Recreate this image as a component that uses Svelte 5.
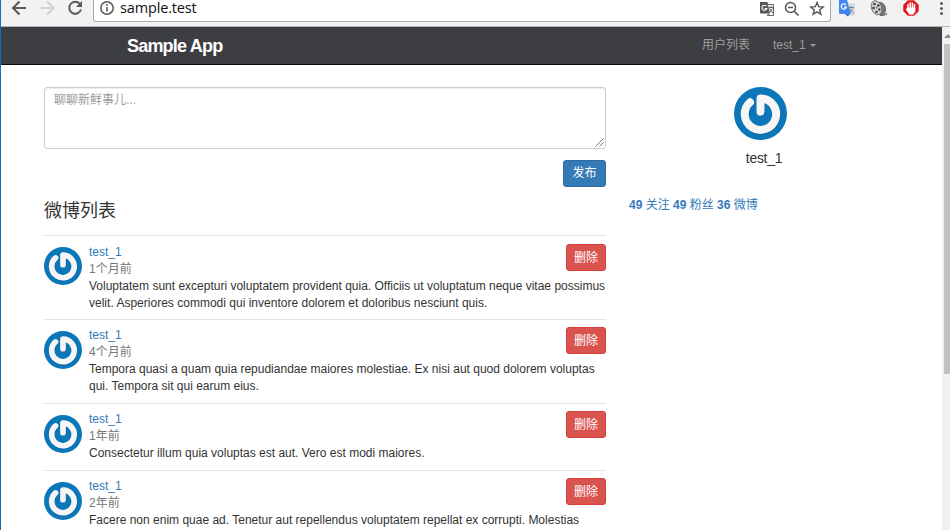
<script>
  const posts = [
    { age: '1个月前', lines: [
      { text: 'Voluptatem sunt excepturi voluptatem provident quia. Officiis ut voluptatum neque vitae possimus', ls: 0 },
      { text: 'velit. Asperiores commodi qui inventore dolorem et doloribus nesciunt quis.', ls: 0.01 }] },
    { age: '4个月前', lines: [
      { text: 'Tempora quasi a quam quia repudiandae maiores molestiae. Ex nisi aut quod dolorem voluptas', ls: 0 },
      { text: 'qui. Tempora sit qui earum eius.', ls: 0 }] },
    { age: '1年前', lines: [
      { text: 'Consectetur illum quia voluptas est aut. Vero est modi maiores.', ls: 0 }] },
    { age: '2年前', lines: [
      { text: 'Facere non enim quae ad. Tenetur aut repellendus voluptatem repellat ex corrupti. Molestias', ls: 0 }] }
  ];
</script>

{#snippet avatar(size)}
  <svg class="avatar" width={size} height={size} viewBox="0 0 52 52">
    <circle cx="26" cy="26" r="26" fill="#0b76b8" />
    <g fill="none" stroke-linecap="round" stroke-linejoin="round">
      <path d="M15.800 15A15.400 15.400 0 1 0 26 11.200V24.300" stroke="#07568a" stroke-opacity=".5" stroke-width="8" transform="translate(.4 .8)" />
      <path d="M15.800 15A15.400 15.400 0 1 0 26 11.200V24.300" stroke="#f6f6f6" stroke-width="7.800" />
    </g>
  </svg>
{/snippet}

<div class="window">
  <header class="toolbar">
    <svg class="tools" width="90" height="25" viewBox="0 0 90 25" fill="none" stroke="#5a5a5a" stroke-width="2">
      <path d="M26 8H13.500M19.500 1.500L13 8l6.500 6.500" />
      <path d="M40 8h12.500M47 1.500l6.500 6.500-6.500 6.500" stroke="#d2d2d4" />
      <path d="M79.800 3.800A6 6 0 1 0 81 9.500" />
      <path d="M82 1v6h-6z" fill="#5a5a5a" stroke="none" />
    </svg>
    <div class="address">
      <svg width="16" height="18" viewBox="0 0 16 18">
        <circle cx="7" cy="9" r="6.200" fill="none" stroke="#5a5a5a" stroke-width="1.500" />
        <path d="M6.200 5h1.600v1.700H6.200zM6.200 8h1.600v4.500H6.200z" fill="#5a5a5a" />
      </svg>
      <span class="url">sample.test</span>
      <svg class="actions" width="76" height="20" viewBox="0 0 76 20">
        <path d="M4 2h7.500l2.500 11.500H5q-1 0-1-1z" fill="#555" />
        <path d="M11.500 4.500H17.500V15.500H11l2.500-2z" fill="#f5f5f5" stroke="#666" />
        <path d="M10.300 6.100A2.500 2.500 0 1 0 10.800 8.500H8.500" fill="none" stroke="#fff" stroke-width="1.100" />
        <path d="M13 7.500h4M15 6v1.500M13.500 8.500l3.300 4.500M16.500 8.500l-3 4" fill="none" stroke="#666" />
        <circle cx="34.500" cy="7.500" r="5" fill="none" stroke="#555" stroke-width="1.500" />
        <path d="M32 7.500h5M38 11l4.500 4.500" fill="none" stroke="#555" stroke-width="1.700" />
        <path d="M61 2.500l1.700 4.200 4.500.3-3.500 2.900 1.200 4.400-3.900-2.400-3.900 2.400 1.200-4.400-3.500-2.900 4.500-.3z" fill="none" stroke="#555" stroke-width="1.400" />
      </svg>
    </div>
    <svg class="extensions" width="119" height="25" viewBox="0 0 119 25">
      <path d="M14 3h10v13H16z" fill="#dadce0" />
      <path d="M8 0h8l4 14H9q-1 0-1-1z" fill="#4285f4" />
      <path d="M14 14h5l-2.500 2.500z" fill="#3467d6" />
      <path d="M14.800 4.800A2.600 2.600 0 1 0 15.300 7.200H13" stroke="#fff" stroke-width="1.200" fill="none" />
      <path d="M17.500 7.500H23M20 6v1.500M18.500 8.500l4 5M22 8.500l-3.500 4" stroke="#6f8794" fill="none" />
      <ellipse cx="49.500" cy="8.500" rx="5.500" ry="7" fill="#777" transform="rotate(-20 49.500 8.500)" />
      <ellipse cx="45.500" cy="7.800" rx="5" ry="7.300" fill="#d0d0d0" stroke="#666" stroke-width=".8" transform="rotate(-20 45.500 7.800)" />
      <g fill="#444"><circle cx="43.500" cy="4" r="1.300" /><circle cx="47.300" cy="5.500" r="1.300" /><circle cx="42.500" cy="8" r="1.300" /><circle cx="48.300" cy="9.500" r="1.300" /><circle cx="45.500" cy="12" r="1.300" /><circle cx="45.500" cy="7.800" r=".7" /></g>
      <path d="M49 15q4 .8 7-1.500" stroke="#666" stroke-width="1.500" fill="none" />
      <path d="M77 .3h6l4.700 4.500v6.400L83 15.800h-6L72.300 11.200V4.800z" fill="#e5131b" />
      <path d="M77 9V4.500M79.200 8V2.800M81.400 8V3.200M83.500 9V4.500" stroke="#fff" stroke-width="1.500" stroke-linecap="round" />
      <path d="M76.300 7.500h8v4l-2 3h-4l-3.500-5z" fill="#fff" />
      <g fill="#5a5a5a"><circle cx="110.500" cy="3.500" r="1.500" /><circle cx="110.500" cy="8.500" r="1.500" /><circle cx="110.500" cy="13.500" r="1.500" /></g>
    </svg>
  </header>
  <div class="viewport">
    <div class="page">
      <nav>
        <span class="brand">Sample App</span>
        <span class="users">用户列表</span>
        <span class="account">test_1<i></i></span>
      </nav>
      <main>
        <section class="feed">
          <div class="compose">聊聊新鲜事儿...
            <svg class="grip" width="9" height="9" viewBox="0 0 9 9"><path d="M.5 8.500l8-8M4.500 8.500l4-4" stroke="#666" stroke-width=".9" /></svg>
          </div>
          <button class="publish">发布</button>
          <h3>微博列表</h3>
          <ol>
            {#each posts as post}
              <li>
                {@render avatar(38)}
                <div class="body">
                  <span class="link">test_1</span>
                  <span class="age">{post.age}</span>
                  {#each post.lines as line}
                    <span class="line" style="letter-spacing: {line.ls}px">{line.text}</span>
                  {/each}
                </div>
                <button class="delete">删除</button>
              </li>
            {/each}
          </ol>
        </section>
        <aside>
          <div class="profile">
            {@render avatar(53)}
            <h1>test_1</h1>
          </div>
          <div class="stats"><b>49</b> 关注 <b>49</b> 粉丝 <b>36</b> 微博</div>
        </aside>
      </main>
    </div>
    <div class="scrollbar"><i class="up"></i><div class="thumb"></div></div>
  </div>
</div>

<style>
  :global(body) { margin: 0; background: #fff; }
  .window { box-sizing: border-box; width: 950px; height: 530px; overflow: hidden; border-left: 1px solid #0f6fb9; background: #fff; color: #333; font: 12px/17px "Liberation Sans", "Noto Sans CJK SC", sans-serif; display: flex; flex-direction: column; }
  .toolbar { box-sizing: border-box; height: 27px; flex: none; display: flex; background: #f2f2f2; border-bottom: 1px solid #b4b4b4; }
  .tools { flex: none; width: 90px; margin-left: -1px; }
  .address { box-sizing: border-box; width: 739px; height: 22px; margin-left: 3px; border: 1px solid #a9a9a9; border-top: 0; border-radius: 0 0 3px 3px; background: #fff; display: flex; padding-left: 6px; }
  .address svg { flex: none; margin-top: -1px; }
  .url { font: 14.500px/16px "Open Sans", "Noto Sans", sans-serif; color: #111; margin-left: 4px; letter-spacing: -.15px; }
  .address .actions { margin: 0 -2px 0 auto; }
  .extensions { flex: none; }
  .viewport { flex: 1; min-height: 0; display: flex; }
  .page { width: 941px; flex: none; }
  nav { box-sizing: border-box; height: 38px; background: #3d3e42; border-bottom: 1px solid #090909; display: flex; align-items: center; color: #9d9d9d; padding-left: 126px; }
  .brand { color: #fff; font-size: 18px; font-weight: bold; letter-spacing: -.8px; width: 575px; padding-top: 1px; }
  .users { width: 71px; }
  .account { display: flex; align-items: center; }
  .account i { border: 3px solid transparent; border-top-color: currentColor; border-bottom: 0; margin-left: 4px; }
  main { display: flex; padding: 22px 0 0 43px; }
  .feed { width: 562px; display: flex; flex-direction: column; }
  .compose { box-sizing: border-box; position: relative; height: 62px; border: 1px solid #ccc; border-radius: 3px; padding: 4px 9px; color: #999; box-shadow: inset 0 1px 1px rgba(0,0,0,.075); }
  .grip { position: absolute; right: 1px; bottom: 1px; }
  button { box-sizing: border-box; height: 27px; padding: 0; border-radius: 3px; color: #fff; font: 12px/17px "Liberation Sans", "Noto Sans CJK SC", sans-serif; }
  .publish { width: 43px; align-self: flex-end; margin-top: 11px; background: #337ab7; border: 1px solid #2e6da4; }
  h3 { margin: 14px 0 14px; font-size: 18px; line-height: 20px; font-weight: normal; }
  ol { margin: 0; padding: 0; list-style: none; }
  li { display: flex; padding: 7px 0 8px; border-top: 1px solid #e5e5e5; }
  li:first-child { padding: 8px 0 7px; }
  li .avatar { margin: 4px 7px -10px 0; }
  li:first-child .avatar { margin-top: 3px; }
  .avatar { flex: none; display: block; }
  .body { width: 477px; flex: none; display: flex; flex-direction: column; }
  .line { white-space: nowrap; }
  .link, .stats { color: #337ab7; }
  .age { color: #777; }
  .delete { width: 40px; flex: none; padding-top: 1px; background: #d9534f; border: 1px solid #d43f3a; }
  aside { width: 262px; margin-left: 23px; }
  .profile { display: flex; flex-direction: column; align-items: center; }
  h1 { margin: 9px 0 0; padding-left: 8px; font-size: 14px; line-height: 18px; font-weight: normal; letter-spacing: -.3px; }
  .stats { margin-top: 30px; }
  .scrollbar { width: 8px; background: #f1f1f1; display: flex; flex-direction: column; align-items: flex-end; overflow: hidden; }
  .up { border: 4px solid transparent; border-top: 0; border-bottom-color: #8b8b8b; margin: 7px -2px 6px 0; }
  .thumb { width: 6px; height: 330px; background: #c1c1c1; }
</style>
